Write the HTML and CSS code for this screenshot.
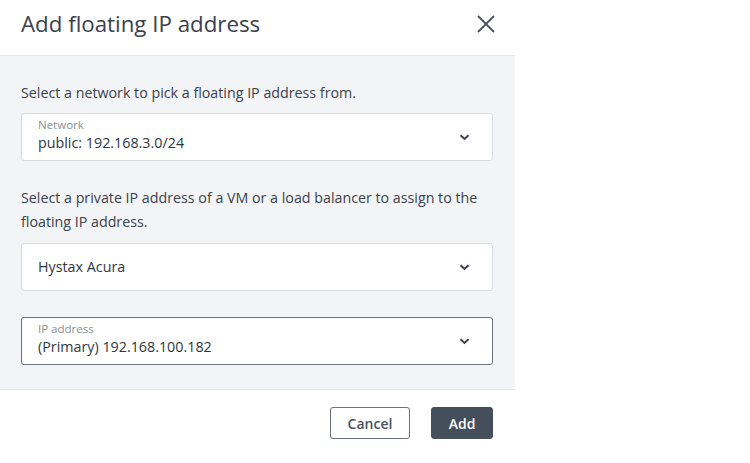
FILE: index.html
```html
<!DOCTYPE html>
<html>
<head>
<meta charset="utf-8">
<link rel="stylesheet" href="styles.css">
</head>
<body>
<div class="dialog">
  <div class="header">
    <h1 class="title">Add floating IP address</h1>
    <button class="close" aria-label="Close">
      <svg width="18" height="18" viewBox="0 0 18 18"><path d="M1 1L17 17M17 1L1 17" stroke="#4a525e" stroke-width="1.8" fill="none"/></svg>
    </button>
  </div>
  <div class="body">
    <p class="text">Select a network to pick a floating IP address from.</p>
    <div class="field labelled">
      <div class="field-main">
        <span class="label">Network</span>
        <span class="value">public: 192.168.3.0/24</span>
      </div>
      <svg class="chev" width="11" height="7" viewBox="0 0 11 7"><path d="M1.5 1.3L5.5 5L9.5 1.3" stroke="#3a424e" stroke-width="2" fill="none"/></svg>
    </div>
    <p class="text second">Select a private IP address of a VM or a load balancer to assign to the floating IP address.</p>
    <div class="field">
      <div class="field-main">
        <span class="value">Hystax Acura</span>
      </div>
      <svg class="chev" width="11" height="7" viewBox="0 0 11 7"><path d="M1.5 1.3L5.5 5L9.5 1.3" stroke="#3a424e" stroke-width="2" fill="none"/></svg>
    </div>
    <div class="field labelled focused">
      <div class="field-main">
        <span class="label">IP address</span>
        <span class="value">(Primary) 192.168.100.182</span>
      </div>
      <svg class="chev" width="11" height="7" viewBox="0 0 11 7"><path d="M1.5 1.3L5.5 5L9.5 1.3" stroke="#3a424e" stroke-width="2" fill="none"/></svg>
    </div>
  </div>
  <div class="footer">
    <button class="btn btn-secondary">Cancel</button>
    <button class="btn btn-primary">Add</button>
  </div>
</div>
</body>
</html>
```
FILE: styles.css
```css
* { box-sizing: border-box; }
html, body { margin: 0; padding: 0; background: #fff; }
body {
  font-family: "Open Sans", "Noto Sans", sans-serif;
  color: #3a424e;
  width: 750px;
  height: 463px;
  overflow: hidden;
}
.dialog {
  width: 515px;
  background: #fff;
}
.header {
  height: 56px;
  border-bottom: 1px solid #e4e6e9;
  display: flex;
  justify-content: space-between;
  align-items: flex-start;
  padding: 9px 21px 0 21px;
}
.title {
  margin: 0;
  font-size: 22.3px;
  line-height: 30px;
  font-weight: 400;
  color: #3a424e;
}
.close {
  border: 0;
  background: none;
  padding: 0;
  margin-top: 6px;
  margin-right: -1px;
  width: 18px;
  height: 18px;
  display: flex;
}
.body {
  background: #f3f4f5;
  padding: 25px 22px 24px 21px;
  border-bottom: 1px solid #e4e6e9;
}
.text {
  margin: 0;
  font-size: 14.25px;
  line-height: 24px;
  color: #3a424e;
}
.second {
  margin-top: 25px;
  margin-bottom: 9px;
}
.field {
  height: 48px;
  margin-top: 8px;
  background: #fff;
  border: 1px solid #d8dbdf;
  border-radius: 3px;
  display: flex;
  align-items: center;
  justify-content: space-between;
  padding: 0 22px 0 16px;
}
.second + .field { margin-top: 0; }
.field.focused {
  margin-top: 26px;
  border-color: #6b727d;
}
.field-main {
  display: flex;
  flex-direction: column;
}
.labelled .field-main { margin-top: -3px; }
.label {
  font-size: 11.5px;
  line-height: 14px;
  color: #8a9099;
}
.value {
  font-size: 14.3px;
  line-height: 22px;
  color: #2f3742;
}
.chev { display: block; margin-top: 1px; }
.footer {
  display: flex;
  justify-content: flex-end;
  gap: 21px;
  padding: 17px 22px 0 0;
  height: 73px;
}
.btn {
  height: 32px;
  border-radius: 3px;
  font-family: "Open Sans", "Noto Sans", sans-serif;
  font-size: 14px;
  font-weight: 600;
  padding: 0;
}
.btn-secondary {
  width: 80px;
  background: #fff;
  border: 1px solid #6b727d;
  color: #4a525e;
}
.btn-primary {
  width: 62px;
  background: #454f5c;
  border: 1px solid #454f5c;
  color: #fff;
}
```
